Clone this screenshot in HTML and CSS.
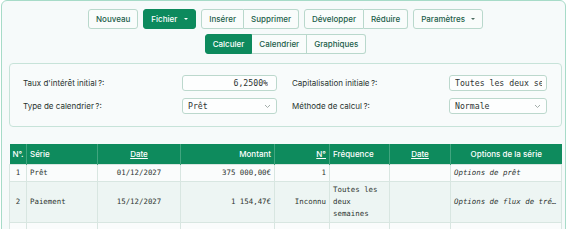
FILE: index.html
```html
<!DOCTYPE html>
<html lang="fr">
<head>
<meta charset="utf-8">
<title>Calculateur</title>
<link rel="stylesheet" href="styles.css">
</head>
<body>
<div class="app">
  <div class="toolbar">
    <div class="row">
      <button class="btn">Nouveau</button>
      <button class="btn primary">Fichier <span class="caret"></span></button>
      <div class="group">
        <button class="btn">Insérer</button>
        <button class="btn">Supprimer</button>
      </div>
      <div class="group">
        <button class="btn">Développer</button>
        <button class="btn">Réduire</button>
      </div>
      <button class="btn">Paramètres <span class="caret dark"></span></button>
    </div>
    <div class="row">
      <div class="group">
        <button class="btn primary">Calculer</button>
        <button class="btn">Calendrier</button>
        <button class="btn">Graphiques</button>
      </div>
    </div>
  </div>

  <div class="panel">
    <label class="label">Taux d'intérêt initial&#8239;?:</label>
    <input class="field num" type="text" value="6,2500%" readonly>
    <label class="label">Capitalisation initiale&#8239;?:</label>
    <input class="field" type="text" value="Toutes les deux semaines" readonly>
    <label class="label">Type de calendrier&#8239;?:</label>
    <div class="select-wrap">
      <select class="field select"><option>Prêt</option></select>
      <svg class="chev" width="7" height="5" viewBox="0 0 7 5"><path d="M1 1 L3.5 3.5 L6 1" fill="none" stroke="#9aa5a1" stroke-width="0.9"/></svg>
    </div>
    <label class="label">Méthode de calcul&#8239;?:</label>
    <div class="select-wrap">
      <select class="field select"><option>Normale</option></select>
      <svg class="chev" width="7" height="5" viewBox="0 0 7 5"><path d="M1 1 L3.5 3.5 L6 1" fill="none" stroke="#9aa5a1" stroke-width="0.9"/></svg>
    </div>
  </div>

  <table class="grid">
    <colgroup>
      <col class="c-no"><col class="c-serie"><col class="c-date"><col class="c-mont">
      <col class="c-n"><col class="c-freq"><col class="c-date2"><col class="c-opt">
    </colgroup>
    <thead>
      <tr>
        <th class="left">N°.</th>
        <th class="left">Série</th>
        <th><u>Date</u></th>
        <th class="right">Montant</th>
        <th class="right"><u>N°</u></th>
        <th class="left">Fréquence</th>
        <th><u>Date</u></th>
        <th>Options de la série</th>
      </tr>
    </thead>
    <tbody>
      <tr class="odd">
        <td class="center">1</td>
        <td>Prêt</td>
        <td class="center">01/12/2027</td>
        <td class="right">375 000,00€</td>
        <td class="right">1</td>
        <td></td>
        <td></td>
        <td class="opt">Options de prêt</td>
      </tr>
      <tr class="even">
        <td class="center">2</td>
        <td>Paiement</td>
        <td class="center">15/12/2027</td>
        <td class="right">1 154,47€</td>
        <td class="right">Inconnu</td>
        <td class="wrap">Toutes les deux semaines</td>
        <td></td>
        <td class="opt">Options de flux de trésorerie</td>
      </tr>
      <tr class="odd">
        <td></td><td></td><td></td><td></td><td></td><td></td><td></td><td></td>
      </tr>
    </tbody>
  </table>
</div>
</body>
</html>
```

FILE: styles.css
```css
* { box-sizing: border-box; }

body {
  margin: 0;
  background: #ffffff;
  font-family: Inter, "Noto Sans", sans-serif;
  font-size: 8px;
  color: #1e2b27;
}

.app {
  margin: 0 4px 0 1px;
  height: 260px;
  border: 1px solid #a7dbc8;
  border-radius: 6px;
  background: #f6fafa;
  padding: 8px 3px 0 7px;
  overflow: hidden;
}

/* toolbar */
.toolbar {
  display: flex;
  flex-direction: column;
  align-items: center;
  gap: 5px;
}
.row {
  display: flex;
  gap: 5px;
}
.group {
  display: flex;
}
.btn {
  height: 20px;
  padding: 0 7px;
  border: 1px solid #b9d8cc;
  border-radius: 3px;
  background: #f9fcfb;
  color: #215c49;
  font-family: Inter, "Noto Sans", sans-serif;
  font-size: 8px;
  font-weight: 500;
  display: flex;
  align-items: center;
  white-space: nowrap;
}
.group .btn { border-radius: 0; }
.group .btn + .btn { border-left: none; }
.group .btn:first-child { border-radius: 3px 0 0 3px; }
.group .btn:last-child { border-radius: 0 3px 3px 0; }
.btn.primary {
  background: #0d8a5d;
  border-color: #0d8a5d;
  color: #ffffff;
}
.caret {
  display: inline-block;
  margin-left: 7px;
  width: 0;
  height: 0;
  border-left: 2px solid transparent;
  border-right: 2px solid transparent;
  border-top: 2px solid #ffffff;
}
.caret.dark { border-top-color: #4b6b60; margin-left: 6px; }

/* panel */
.panel {
  margin-top: 9px;
  border: 1px solid #c7e3d9;
  border-radius: 4px;
  background: #f8fbfb;
  padding: 11px 13px 12px 13px;
  display: grid;
  grid-template-columns: 144px 95px 142px 98px;
  column-gap: 15px;
  row-gap: 7px;
  align-items: center;
}
.label {
  font-size: 8px;
  color: #28332f;
}
.field {
  width: 100%;
  height: 16px;
  border: 1px solid #bcd8cd;
  border-radius: 3px;
  background: #fdfefe;
  font-family: "DejaVu Sans Mono", "Liberation Mono", monospace;
  font-size: 8.2px;
  color: #2e3532;
  padding: 0 4px 0 5px;
  outline: none;
}
.field.num { text-align: right; padding-right: 8px; }
.select-wrap { position: relative; height: 16px; }
.select {
  appearance: none;
  -webkit-appearance: none;
  display: block;
}
.chev { position: absolute; right: 6px; top: 6px; }

/* table */
.grid {
  margin-top: 17px;
  width: 552px;
  border-collapse: collapse;
  table-layout: fixed;
}
.c-no { width: 17px; }
.c-serie { width: 71px; }
.c-date { width: 83px; }
.c-mont { width: 94px; }
.c-n { width: 55px; }
.c-freq { width: 60px; }
.c-date2 { width: 61px; }
.c-opt { width: 111px; }

th {
  background: #0e8b5d;
  color: #ffffff;
  font-weight: 500;
  font-size: 8px;
  line-height: 12px;
  padding: 4px 3px;
  text-align: center;
  border-left: 1px solid #41a57f;
  white-space: nowrap;
  overflow: hidden;
}
th:first-child { border-left: none; }
th.left { text-align: left; }
th.right { text-align: right; }
th u { text-underline-offset: 1px; }

td {
  font-family: "DejaVu Sans Mono", "Liberation Mono", monospace;
  font-size: 7.4px;
  color: #2f3532;
  line-height: 12px;
  padding: 2px 3px;
  border: 1px solid #d8e6e1;
  vertical-align: middle;
  white-space: nowrap;
  overflow: hidden;
}
tr.odd td { background: #fafcfc; }
tr.even td { background: #edf5f3; }
td.center { text-align: center; }
td.right { text-align: right; }
td.wrap { white-space: normal; }
td.opt {
  font-style: italic;
  text-overflow: ellipsis;
}
tbody tr:last-child td { height: 17px; }
```
